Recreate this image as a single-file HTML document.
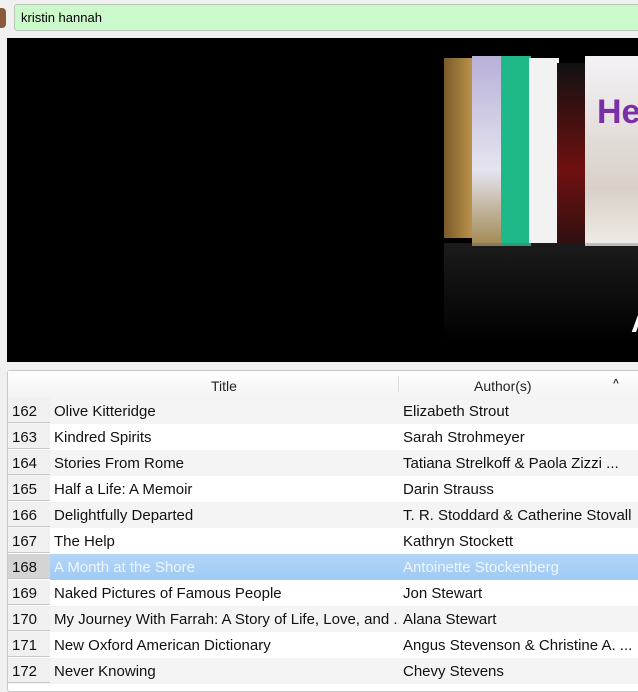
<!DOCTYPE html><html><head><style>
body{margin:0;width:638px;height:678px;background:#f0f0f0;font-family:"Liberation Sans",sans-serif;position:relative;overflow:hidden}
.abs{position:absolute}
#search{left:14px;top:4px;width:630px;height:27px;background:#ccf9cc;border:1px solid #b8c8b8;border-radius:3px;box-sizing:border-box;font-size:13px;line-height:25px;padding-left:6px;color:#000}
#flow{left:7px;top:38px;width:631px;height:324px;background:#000;overflow:hidden}
#tbl{left:7px;top:370px;width:640px;height:320px;background:#fff;border:1px solid #c8c8c8;border-radius:3px}
#hdr{left:8px;top:371px;width:630px;height:27px;background:linear-gradient(#fff,#f3f3f3);border-bottom:1px solid #dcdcdc;font-size:14px;color:#222}
.row{position:absolute;left:8px;width:630px;height:26px;font-size:15px;line-height:28px;color:#111}
.num{position:absolute;left:0;width:42px;height:25px;background:#f0f0f0;border-bottom:1px solid #c8c8c8;padding-left:4px;box-sizing:border-box}
.t{position:absolute;left:46px;width:345px;white-space:nowrap;overflow:hidden}
.a{position:absolute;left:395px;white-space:nowrap}
.sel{background:linear-gradient(#b3d6f8,#9fcaf4);color:#eef6ff}
</style></head><body>
<div class="abs" style="left:0;top:8px;width:6px;height:20px;background:#8a5a3a;border-radius:0 4px 4px 0"></div>
<div id="search" class="abs">kristin hannah</div>
<div id="flow" class="abs">
 <div class="abs" style="left:437px;top:20px;width:32px;height:180px;background:linear-gradient(90deg,#7a5a28,#c49a50);"></div>
 <div class="abs" style="left:465px;top:18px;width:32px;height:190px;background:linear-gradient(#b8b0d8,#e6e4f0 60%,#a08850);"></div>
 <div class="abs" style="left:494px;top:18px;width:30px;height:190px;background:#1fb888"></div>
 <div class="abs" style="left:522px;top:20px;width:30px;height:185px;background:#f2f2f2"></div>
 <div class="abs" style="left:550px;top:25px;width:30px;height:180px;background:linear-gradient(#111,#701010 60%,#301010)"></div>
 <div class="abs" style="left:578px;top:18px;width:60px;height:190px;background:linear-gradient(#f4f2f6,#d8d0c8 70%,#f0ece8)"></div>
 <div class="abs" style="left:590px;top:55px;font-size:34px;font-weight:bold;color:#7a2ea8">Help</div>
 <div class="abs" style="left:437px;top:205px;width:200px;height:100px;background:linear-gradient(rgba(90,90,90,.3),#000)"></div>
 <div class="abs" style="left:624px;top:268px;font-size:30px;color:#fff;font-weight:bold">A</div>
</div>
<div id="tbl" class="abs"></div>
<div id="hdr" class="abs">
 <span class="abs" style="left:203px;top:7px">Title</span>
 <span class="abs" style="left:390px;top:5px;width:1px;height:16px;background:#ddd"></span>
 <span class="abs" style="left:466px;top:7px">Author(s)</span>
 <span class="abs" style="left:605px;top:7px;font-size:10px;font-weight:bold">^</span>
</div>
<div class="row" style="top:398px;background:#f4f4f4"><div class="num">162</div><div class="t">Olive Kitteridge</div><div class="a">Elizabeth Strout</div></div>
<div class="row" style="top:424px;background:#fff"><div class="num">163</div><div class="t">Kindred Spirits</div><div class="a">Sarah Strohmeyer</div></div>
<div class="row" style="top:450px;background:#f4f4f4"><div class="num">164</div><div class="t">Stories From Rome</div><div class="a">Tatiana Strelkoff &amp; Paola Zizzi ...</div></div>
<div class="row" style="top:476px;background:#fff"><div class="num">165</div><div class="t">Half a Life: A Memoir</div><div class="a">Darin Strauss</div></div>
<div class="row" style="top:502px;background:#f4f4f4"><div class="num">166</div><div class="t">Delightfully Departed</div><div class="a">T. R. Stoddard &amp; Catherine Stovall</div></div>
<div class="row" style="top:528px;background:#fff"><div class="num">167</div><div class="t">The Help</div><div class="a">Kathryn Stockett</div></div>
<div class="row" style="top:554px"><div class="num" style="background:#d4d4d4">168</div><div class="sel abs" style="left:42px;width:590px;height:26px"></div><div class="t" style="color:#eef6ff">A Month at the Shore</div><div class="a" style="color:#eef6ff">Antoinette Stockenberg</div></div>
<div class="row" style="top:580px;background:#fff"><div class="num">169</div><div class="t">Naked Pictures of Famous People</div><div class="a">Jon Stewart</div></div>
<div class="row" style="top:606px;background:#f4f4f4"><div class="num">170</div><div class="t">My Journey With Farrah: A Story of Life, Love, and ...</div><div class="a">Alana Stewart</div></div>
<div class="row" style="top:632px;background:#fff"><div class="num">171</div><div class="t">New Oxford American Dictionary</div><div class="a">Angus Stevenson &amp; Christine A. ...</div></div>
<div class="row" style="top:658px;background:#f4f4f4"><div class="num">172</div><div class="t">Never Knowing</div><div class="a">Chevy Stevens</div></div>
</body></html>
